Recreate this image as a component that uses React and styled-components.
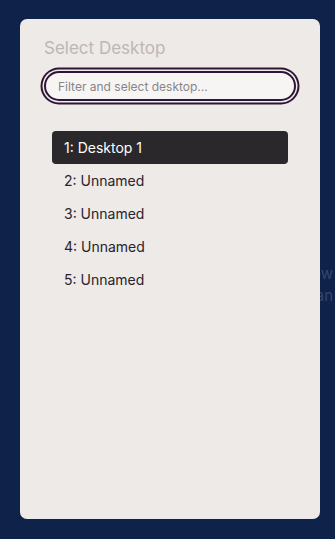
import React from "react";
import styled, { createGlobalStyle } from "styled-components";

const Global = createGlobalStyle`
  html, body { margin: 0; padding: 0; }
  body {
    width: 335px; height: 539px; overflow: hidden;
    background: #0f2249;
    font-family: Inter, "Noto Sans", sans-serif;
  }
`;

const Screen = styled.div`
  position: relative;
  width: 335px;
  height: 539px;
  background: #0f2249;
  overflow: hidden;
`;

const Backdrop = styled.div`
  display: flex;
  flex-direction: column;
  align-items: flex-end;
  gap: 6px;
  padding: 266px 2px 0 0;
  font-size: 15px;
  line-height: 16px;
  color: #34466f;
  white-space: nowrap;
`;

const Panel = styled.div`
  position: absolute;
  left: 20px;
  top: 19px;
  width: 300px;
  height: 500px;
  box-sizing: border-box;
  background: #eeeae7;
  border-radius: 7px;
  padding: 19px 24px 0 24px;
  display: flex;
  flex-direction: column;
`;

const Title = styled.div`
  font-size: 17px;
  line-height: 20px;
  color: #bcb7b5;
  font-weight: 400;
`;

const Search = styled.input`
  margin-top: 13px;
  height: 30px;
  width: 100%;
  box-sizing: border-box;
  border: 2px solid #2b1733;
  border-radius: 999px;
  box-shadow: 0 0 0 1.5px #f4e9f1, 0 0 0 3.5px #2b1733;
  background: #f7f5f3;
  padding: 0 12px;
  font-family: Inter, "Noto Sans", sans-serif;
  font-size: 12px;
  color: #2a2530;
  outline: none;
  &::placeholder { color: #8a8486; }
`;

const List = styled.div`
  margin-top: 30px;
  padding: 0 8px;
  display: flex;
  flex-direction: column;
`;

const Row = styled.div`
  height: 33px;
  display: flex;
  align-items: center;
  padding: 0 12px;
  border-radius: 4px;
  font-size: 14px;
  color: ${(p) => (p.$active ? "#ffffff" : "#28232d")};
  background: ${(p) => (p.$active ? "#2a282b" : "transparent")};
`;

const desktops = ["1: Desktop 1", "2: Unnamed", "3: Unnamed", "4: Unnamed", "5: Unnamed"];

export default function App() {
  return (
    <Screen>
      <Global />
      <Backdrop>
        <span>Desktop overview</span>
        <span>Switch desktop plan</span>
      </Backdrop>
      <Panel>
        <Title>Select Desktop</Title>
        <Search placeholder="Filter and select desktop..." />
        <List>
          {desktops.map((d, i) => (
            <Row key={d} $active={i === 0}>{d}</Row>
          ))}
        </List>
      </Panel>
    </Screen>
  );
}
